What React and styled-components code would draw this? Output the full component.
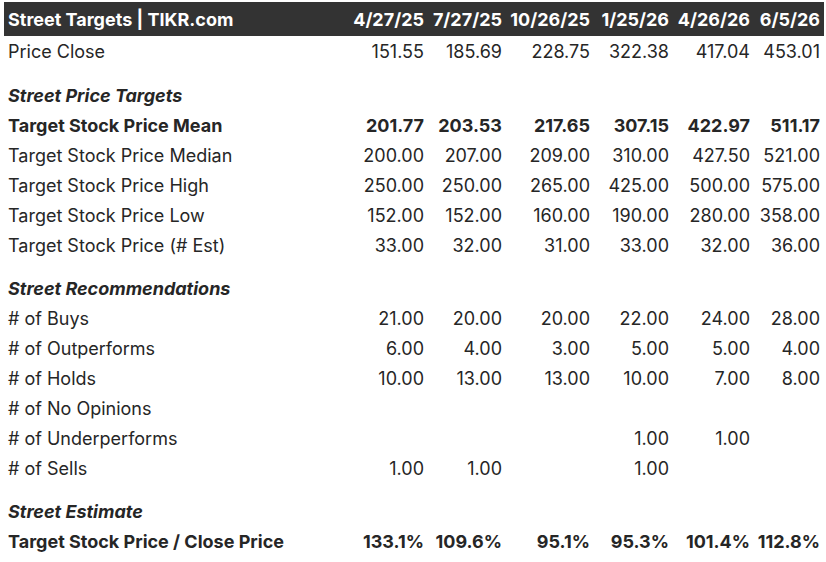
import React from 'react';
import styled, { createGlobalStyle } from 'styled-components';

const GlobalStyle = createGlobalStyle`
  body {
    margin: 0;
    background: #ffffff;
    font-family: Inter, 'Noto Sans', sans-serif;
    color: #262626;
  }
`;

const dates = ['4/27/25', '7/27/25', '10/26/25', '1/25/26', '4/26/26', '6/5/26'];

const sections = [
  {
    rows: [{ label: 'Price Close', values: ['151.55', '185.69', '228.75', '322.38', '417.04', '453.01'] }]
  },
  {
    title: 'Street Price Targets',
    rows: [
      { label: 'Target Stock Price Mean', bold: true, values: ['201.77', '203.53', '217.65', '307.15', '422.97', '511.17'] },
      { label: 'Target Stock Price Median', values: ['200.00', '207.00', '209.00', '310.00', '427.50', '521.00'] },
      { label: 'Target Stock Price High', values: ['250.00', '250.00', '265.00', '425.00', '500.00', '575.00'] },
      { label: 'Target Stock Price Low', values: ['152.00', '152.00', '160.00', '190.00', '280.00', '358.00'] },
      { label: 'Target Stock Price (# Est)', values: ['33.00', '32.00', '31.00', '33.00', '32.00', '36.00'] }
    ]
  },
  {
    title: 'Street Recommendations',
    rows: [
      { label: '# of Buys', values: ['21.00', '20.00', '20.00', '22.00', '24.00', '28.00'] },
      { label: '# of Outperforms', values: ['6.00', '4.00', '3.00', '5.00', '5.00', '4.00'] },
      { label: '# of Holds', values: ['10.00', '13.00', '13.00', '10.00', '7.00', '8.00'] },
      { label: '# of No Opinions', values: ['', '', '', '', '', ''] },
      { label: '# of Underperforms', values: ['', '', '', '1.00', '1.00', ''] },
      { label: '# of Sells', values: ['1.00', '1.00', '', '1.00', '', ''] }
    ]
  },
  {
    title: 'Street Estimate',
    rows: [
      { label: 'Target Stock Price / Close Price', bold: true, values: ['133.1%', '109.6%', '95.1%', '95.3%', '101.4%', '112.8%'] }
    ]
  }
];

const Table = styled.div`
  display: grid;
  grid-template-columns: 344px 80px 78px 88px 79px 81px 70px;
  margin: 2px 0 0 4px;
  width: 820px;
`;

const HeadCell = styled.div`
  background: #333333;
  color: #ffffff;
  font-weight: 700;
  font-size: 18px;
  height: 34px;
  display: flex;
  align-items: center;
  justify-content: ${(p) => (p.$left ? 'flex-start' : 'flex-end')};
  padding: ${(p) => (p.$left ? '0 0 0 4px' : '0 4px 0 0')};
  white-space: nowrap;
`;

const Cell = styled.div`
  height: 30px;
  display: flex;
  align-items: center;
  justify-content: ${(p) => (p.$left ? 'flex-start' : 'flex-end')};
  padding: ${(p) => (p.$left ? '0 0 0 4px' : '0 4px 0 0')};
  font-size: 18px;
  font-weight: ${(p) => (p.$bold ? 700 : 400)};
  white-space: nowrap;
`;

const SectionTitle = styled.div`
  grid-column: 1 / -1;
  height: 30px;
  margin-top: ${(p) => (p.$first ? '14px' : '13px')};
  padding-left: 4px;
  display: flex;
  align-items: center;
  font-size: 18px;
  font-weight: 700;
  font-style: italic;
`;

const App = () => (
  <>
    <GlobalStyle />
    <Table>
      <HeadCell $left>Street Targets | TIKR.com</HeadCell>
      {dates.map((d) => (
        <HeadCell key={d}>{d}</HeadCell>
      ))}
      {sections.map((section, i) => (
        <React.Fragment key={i}>
          {section.title && <SectionTitle $first={i === 1}>{section.title}</SectionTitle>}
          {section.rows.map((row) => (
            <React.Fragment key={row.label}>
              <Cell $left $bold={row.bold}>{row.label}</Cell>
              {row.values.map((v, j) => (
                <Cell key={j} $bold={row.bold}>{v}</Cell>
              ))}
            </React.Fragment>
          ))}
        </React.Fragment>
      ))}
    </Table>
  </>
);

export default App;
